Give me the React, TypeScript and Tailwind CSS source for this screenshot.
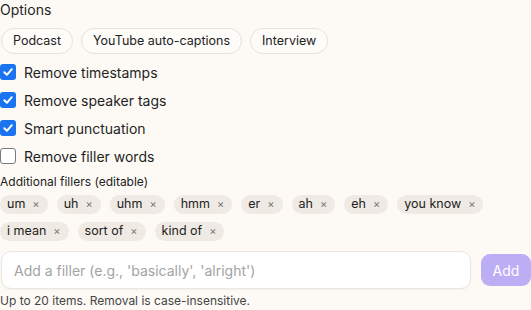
import React from "react";

const Check = ({ checked }: { checked: boolean }) =>
  checked ? (
    <span className="flex h-4 w-4 items-center justify-center rounded-[3px] bg-[#1a73f0]">
      <svg width="12" height="12" viewBox="0 0 12 12">
        <path d="M2.3 6.3 L4.9 8.8 L9.8 3.2" fill="none" stroke="white" strokeWidth="2" strokeLinecap="round" strokeLinejoin="round" />
      </svg>
    </span>
  ) : (
    <span className="h-4 w-4 rounded-[3px] border border-[#7a7a7a] bg-white" />
  );

const presets = ["Podcast", "YouTube auto-captions", "Interview"];
const opts: [string, boolean][] = [
  ["Remove timestamps", true],
  ["Remove speaker tags", true],
  ["Smart punctuation", true],
  ["Remove filler words", false],
];
const row1 = ["um", "uh", "uhm", "hmm", "er", "ah", "eh", "you know"];
const row2 = ["i mean", "sort of", "kind of"];

const Tag = ({ t }: { t: string }) => (
  <span className="flex h-[19px] items-center gap-[7px] rounded-full bg-[#efebe4] pl-[7px] pr-[8px] text-[12.5px] text-[#222]">
    {t}
    <span className="text-[11px] text-[#777]">×</span>
  </span>
);

export default function App() {
  return (
    <div className="h-[310px] w-[531px] overflow-hidden bg-[#fdfaf6] font-['Inter',sans-serif] text-[#1f1f1f]">
      <div className="pt-[1px] text-[14px] leading-[18px]">Options</div>
      <div className="mt-[9px] flex gap-[8px] pl-[1px]">
        {presets.map((p) => (
          <span key={p} className="flex h-[26px] items-center rounded-full border border-[#e6e1da] bg-[#fefcf9] px-[11px] text-[12.5px] text-[#222]">
            {p}
          </span>
        ))}
      </div>
      <div className="mt-[4px] flex flex-col">
        {opts.map(([l, c]) => (
          <label key={l} className="flex h-[28px] items-center gap-[8px] text-[14px]">
            <Check checked={c} />
            <span>{l}</span>
          </label>
        ))}
      </div>
      <div className="mt-[4px] text-[12px] leading-[16px] text-[#222]">Additional fillers (editable)</div>
      <div className="mt-[5px] flex flex-wrap gap-x-[9px]">
        {row1.map((t) => (
          <Tag key={t} t={t} />
        ))}
      </div>
      <div className="mt-[8px] flex flex-wrap gap-x-[9px]">
        {row2.map((t) => (
          <Tag key={t} t={t} />
        ))}
      </div>
      <div className="mt-[10px] flex items-center gap-[10px] pl-[1px]">
        <div className="flex h-[38px] w-[470px] items-center rounded-[10px] border border-[#ebe6df] bg-white px-[12px] text-[14px] text-[#a3a3a3] shadow-[0_1px_2px_rgba(0,0,0,0.04)]">
          Add a filler (e.g., 'basically', 'alright')
        </div>
        <button className="flex h-[32px] w-[50px] items-center justify-center rounded-[9px] bg-[#bcaef5] text-[14px] text-white">
          Add
        </button>
      </div>
      <div className="mt-[4px] text-[12px] leading-[16px] text-[#444]">Up to 20 items. Removal is case-insensitive.</div>
    </div>
  );
}
